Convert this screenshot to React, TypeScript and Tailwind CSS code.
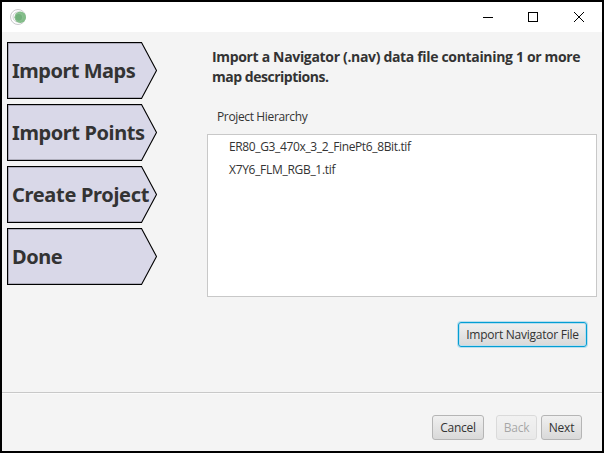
import React from "react";

const steps = [
  { label: "Import Maps", spacing: "tracking-[-0.5px]" },
  { label: "Import Points", spacing: "tracking-[-0.4px]" },
  { label: "Create Project", spacing: "tracking-[-0.32px]" },
  { label: "Done", spacing: "tracking-[-0.5px]" },
];

function Step({ label, spacing }: { label: string; spacing: string }) {
  return (
    <div className="relative flex h-[57px] w-[151px] items-center">
      <svg className="absolute inset-0" width="151" height="57" viewBox="0 0 151 57">
        <path d="M0.5 0.5H134.5L149.5 28.5L134.5 56.5H0.5Z" fill="#d9d8e8" stroke="#000" strokeWidth="1.1" />
        <path d="M1 1.5H134M1 55.5H134M1.5 1V56" stroke="#8e8d98" strokeWidth="0.8" opacity="0.7" />
      </svg>
      <span
        className={`relative ml-[5px] whitespace-nowrap font-['Noto_Sans',sans-serif] text-[20px] font-bold leading-6 text-[#333] ${spacing}`}
      >
        {label}
      </span>
    </div>
  );
}

function FxButton({ className, children }: { className: string; children: React.ReactNode }) {
  return (
    <button
      className={`flex h-[25px] items-center justify-center whitespace-nowrap rounded-[3px] border bg-linear-to-b from-[#f0f0f0] to-[#d9d9d9] pt-px tracking-[-0.25px] ${className}`}
    >
      {children}
    </button>
  );
}

export default function App() {
  return (
    <div className="flex h-[453px] w-[604px] flex-col border-2 border-black bg-[#f4f4f4] font-['Open_Sans',sans-serif] text-[12px] leading-4 text-[#333]">
      <header className="flex h-[30px] shrink-0 items-center bg-white">
        <svg className="ml-[7px]" width="18" height="18" viewBox="0 0 18 18">
          <circle cx="9" cy="9" r="7.5" fill="#fff" stroke="#c9c9cc" />
          <circle cx="9" cy="9" r="5" fill="none" stroke="#d0d0d4" />
          <circle cx="11.3" cy="9.3" r="5.7" fill="#82bd88" />
          <circle cx="9.8" cy="9.3" r="3.9" fill="#72b07b" stroke="#9ac8a0" strokeWidth="0.6" />
        </svg>
        <svg className="ml-auto mr-[16px]" width="104" height="12" viewBox="0 0 104 12" fill="none" stroke="#000">
          <path d="M1 6.5H11" />
          <rect x="46.5" y="1.5" width="9" height="9" />
          <path d="M92 1L102 11M102 1L92 11" />
        </svg>
      </header>
      <main className="flex h-[360px] shrink-0">
        <aside className="flex w-[205px] flex-col gap-[5px] pl-[5px] pt-[10px]">
          {steps.map((s) => (
            <Step key={s.label} {...s} />
          ))}
        </aside>
        <section className="flex w-[390px] flex-col">
          <h1 className="ml-[5px] mt-[15px] whitespace-nowrap text-[14px] font-bold leading-5">
            <span className="tracking-[-0.33px]">Import a Navigator (.nav) data file containing 1 or more</span>
            <br />
            <span className="tracking-[-0.48px]">map descriptions.</span>
          </h1>
          <div className="ml-[10px] mt-[22px] tracking-[-0.36px]">Project Hierarchy</div>
          <div className="mt-[9px] h-[163px] border border-[#c8c8c8] bg-white pl-[21px] leading-[23px]">
            <div className="tracking-[-0.36px]">ER80_G3_470x_3_2_FinePt6_8Bit.tif</div>
            <div className="tracking-[-0.3px]">X7Y6_FLM_RGB_1.tif</div>
          </div>
          <FxButton className="ml-auto mr-[10px] mt-[25px] w-[129px] border-[#039ed3] shadow-[0_0_0_1px_#b9deee,inset_0_0_0_1px_#b9deee]">
            Import Navigator File
          </FxButton>
        </section>
      </main>
      <footer className="flex grow border-t border-[#c8c8c8] pl-[430px] pt-[22px] shadow-[inset_0_1px_0_#fafafa]">
        <FxButton className="w-[52px] border-[#b5b5b5]">Cancel</FxButton>
        <FxButton className="ml-[12px] w-[41px] border-[#b5b5b5] opacity-40">Back</FxButton>
        <FxButton className="ml-[4px] w-[41px] border-[#b5b5b5]">Next</FxButton>
      </footer>
    </div>
  );
}
